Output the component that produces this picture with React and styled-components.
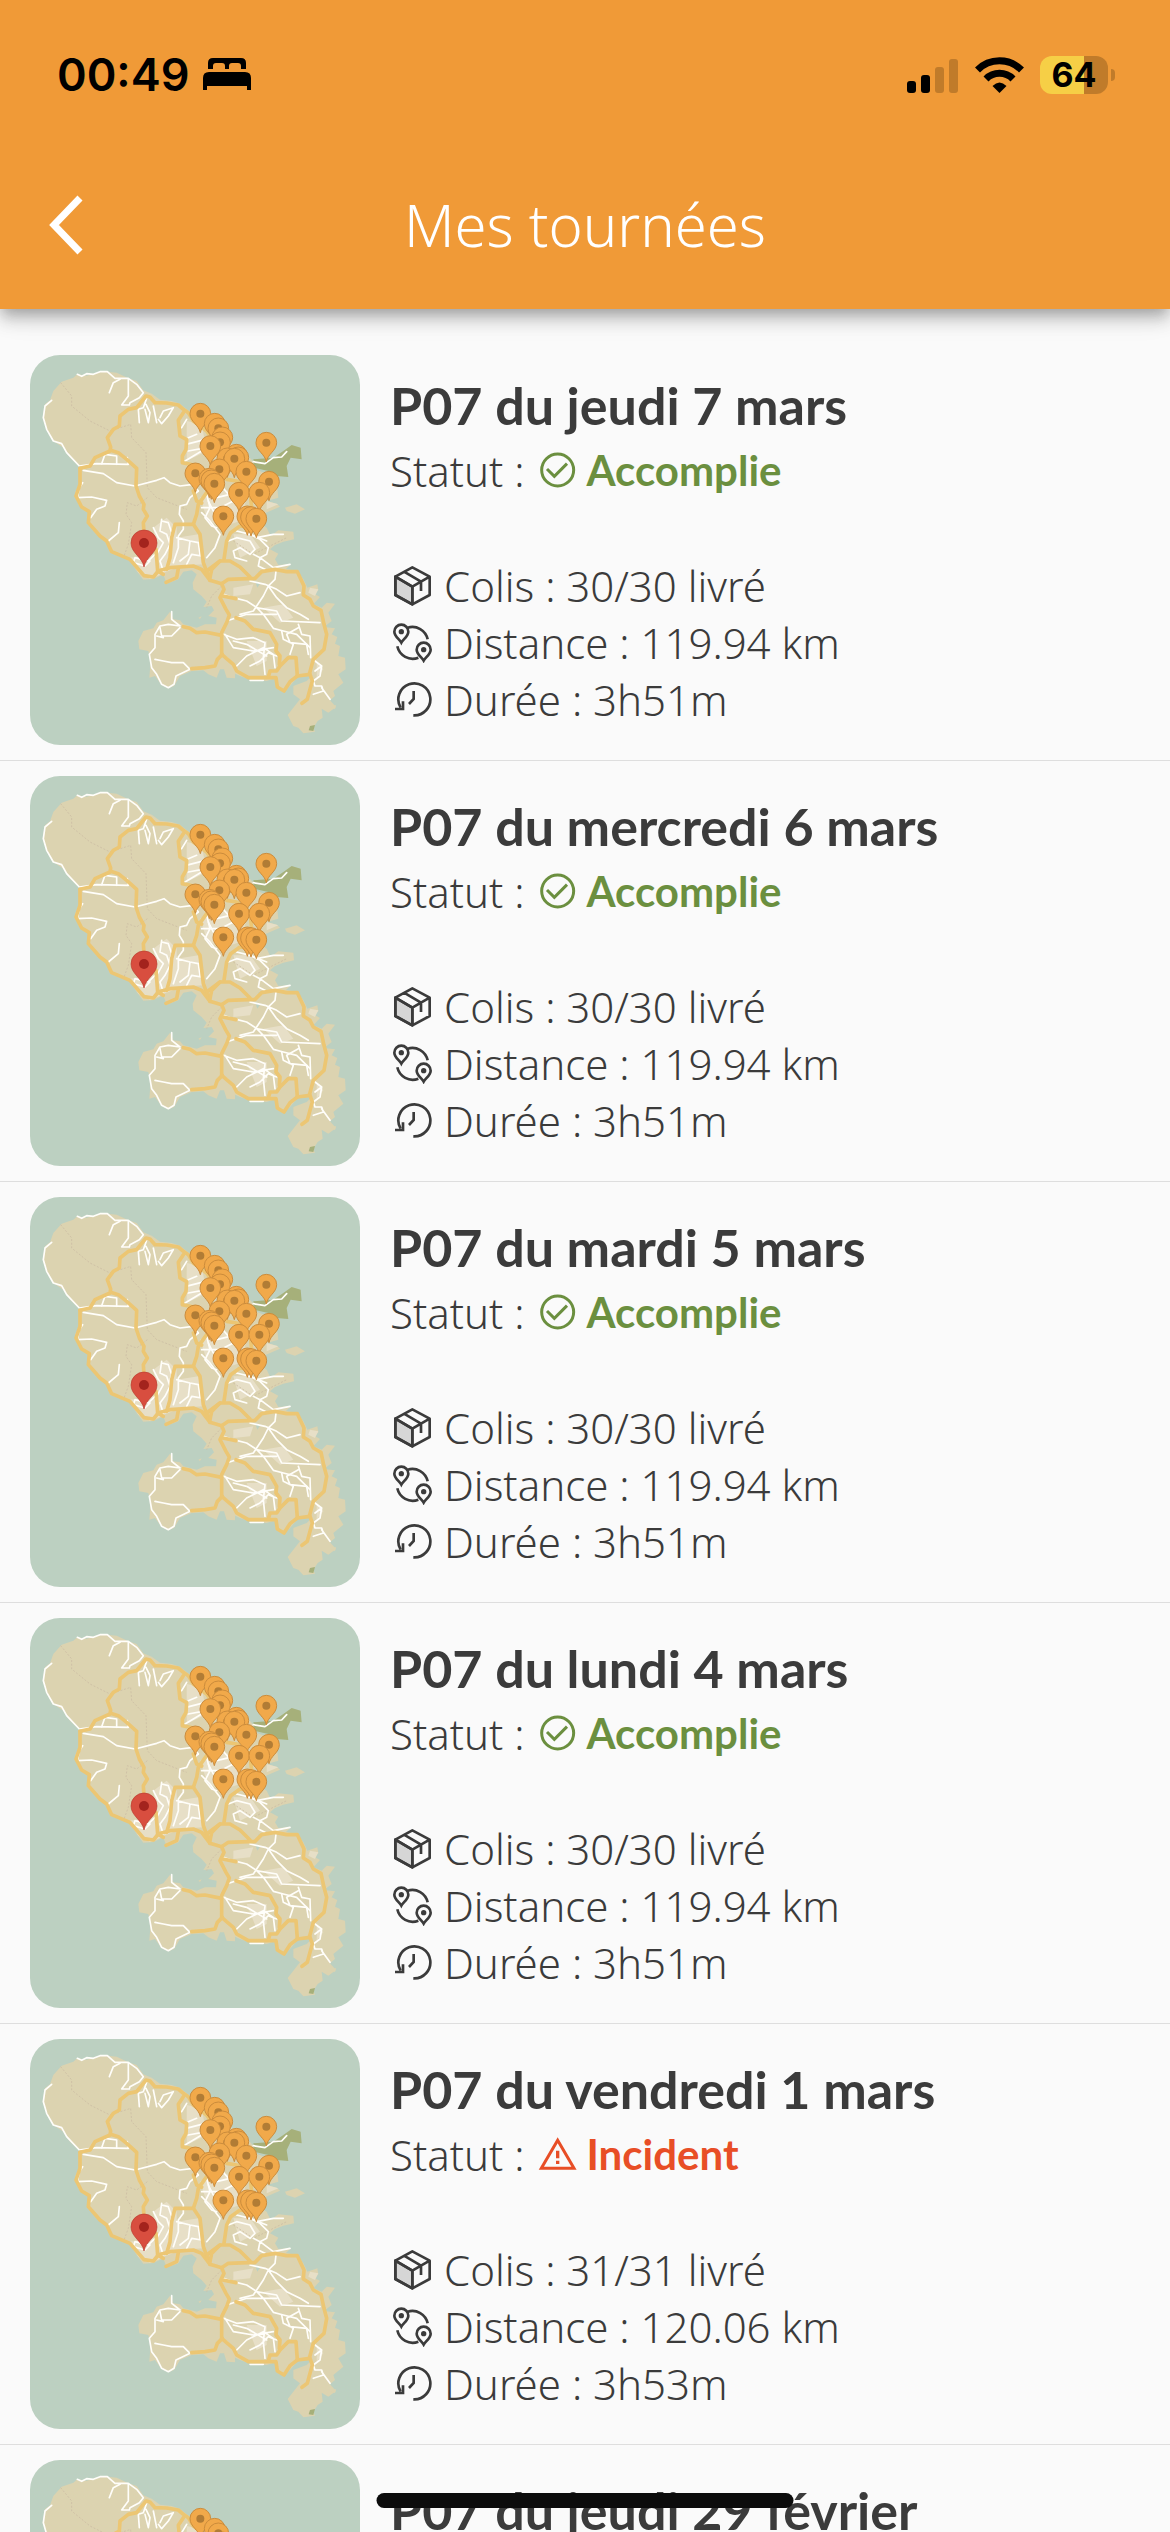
import React from "react";
import styled, { createGlobalStyle } from "styled-components";

const tours = [
  { title: "P07 du jeudi 7 mars", status: "done", parcels: "30/30", distance: "119.94", duration: "3h51m" },
  { title: "P07 du mercredi 6 mars", status: "done", parcels: "30/30", distance: "119.94", duration: "3h51m" },
  { title: "P07 du mardi 5 mars", status: "done", parcels: "30/30", distance: "119.94", duration: "3h51m" },
  { title: "P07 du lundi 4 mars", status: "done", parcels: "30/30", distance: "119.94", duration: "3h51m" },
  { title: "P07 du vendredi 1 mars", status: "incident", parcels: "31/31", distance: "120.06", duration: "3h53m" },
  { title: "P07 du jeudi 29 février", status: "done", parcels: "30/30", distance: "119.94", duration: "3h51m" },
];

const statuses = {
  done: { label: "Accomplie", color: "#6b8f3f" },
  incident: { label: "Incident", color: "#e84e26" },
};

// back to front, so the southern pins overlap the northern ones
const pins = [
  [541, 218], [584, 248], [595, 262], [607, 289], [600, 304], [571, 315],
  [739, 305], [649, 341], [655, 349], [622, 352], [643, 353], [598, 385],
  [679, 392], [526, 397], [747, 422], [568, 413], [574, 418], [583, 428],
  [657, 455], [718, 455], [610, 526], [682, 526], [693, 528], [709, 533],
];

const LAND =
  "M172 100L200 104L235 94L262 92L290 95L325 112L350 120L370 148L395 158L420 176L455 180L480 188L500 205L530 225L555 260L580 290L640 310L680 340L700 362L705 385L745 400L770 425L775 470L740 480L770 488L780 497L745 512L730 520L715 545L740 560L752 585L775 568L820 572L822 595L790 602L765 612L750 625L775 638L765 655L775 672L812 670L798 684L832 690L850 715L862 740L892 730L895 748L880 757L900 768L880 790L905 800L920 785L945 788L925 815L935 840L912 858L945 862L935 880L952 888L945 908L960 915L955 945L975 950L977 985L955 1000L970 1025L940 1050L945 1065L930 1078L948 1098L925 1115L905 1103L908 1130L893 1140L880 1160L885 1172L850 1177L835 1160L820 1155L803 1122L820 1100L840 1075L820 1060L820 1035L860 1020L875 1005L835 1005L810 1035L790 1052L768 1040L765 1012L740 1020L700 1018L680 1012L660 1005L645 998L645 1012L620 1010L612 985L600 985L590 1010L565 1000L550 988L515 990L480 1005L462 1035L445 1042L425 1032L405 1005L388 1010L392 960L385 930L358 925L355 900L370 870L400 862L410 845L430 838L450 812L460 835L480 838L490 850L530 860L555 850L588 850L590 830L565 825L582 808L575 795L550 798L560 782L545 765L520 745L518 725L530 700L515 688L490 692L475 715L440 728L430 700L400 714L370 716L350 690L330 655L300 645L270 635L262 605L230 580L205 548L205 510L175 490L165 455L180 420L180 378L150 350L130 320L100 300L80 265L68 230L75 190L90 178L100 150L125 122L160 110Z";

const YELLOW = [
  "M180 382L210 375L225 350L270 330L272 318L262 290L280 265L298 255L300 225L325 205L350 200L378 165L390 168L405 185L440 186L475 192L490 205L505 215L520 240L560 270L580 300",
  "M490 215L475 238L480 285L500 296L498 325L487 345L487 365L520 372L560 390",
  "M180 382L180 430L168 465L185 498L208 512L205 545L240 585L260 600L275 632L330 655L360 690L372 704L400 708L415 690",
  "M272 328L295 335L320 355L350 382L348 435L358 465L372 490L370 505L382 525L370 545L373 590",
  "M408 625L413 690L450 680L520 675L545 685L570 718L605 728",
  "M413 690L430 700M440 685L450 650L455 590L465 550L520 550L540 580L550 665L570 718",
  "M520 550L530 520L535 490L560 455M520 450L530 480L545 486",
  "M612 655L620 600L632 575L660 555L700 560M620 415L650 420L690 450L695 500",
  "M560 690L600 660L630 660L660 678L690 708",
  "M570 710L575 685L600 660M605 728L625 715L705 712L725 692L765 685L800 692L832 692L852 735L850 762L870 775L880 795L903 808L912 850L920 880L912 925L880 955L868 1000",
  "M605 728L612 745L600 770L618 805L628 822L620 845L605 875L605 940L640 970L650 990L685 1010L768 1010L772 1038L792 1050L810 1022L832 1005L870 1000L877 1020L870 1045L862 1075L846 1087",
  "M832 1005L828 950L805 950L780 975L770 990L750 990L745 1008",
  "M648 830L675 840L700 865L750 875L770 910L768 930L780 945L778 970",
  "M490 857L510 862L530 875L555 873L605 883M515 983L555 980L585 975L592 955L607 940",
  "M608 765L648 773M438 724L470 710L475 682",
];

const WHITE = [
  "M172 100L185 106L200 98L220 100L240 92L262 92L285 112L325 112L350 130L370 155L358 170L330 185L328 192L305 192L325 165L325 115",
  "M95 178L75 195L70 230L80 265L100 300L125 308L140 335L178 375L230 368L325 370L322 350",
  "M190 388L250 398L290 425L345 435L410 418L432 410L450 425L480 435L520 430L535 450",
  "M188 425L178 440L172 470L215 468L260 478L255 495L230 505L212 530M245 368L255 340L290 345L290 370",
  "M380 172L370 200L355 205L358 245M375 205L385 245L390 215L378 190M400 195L410 245M420 230L430 210L460 200L445 225L425 248L415 235",
  "M500 235L485 260M505 290L530 280M498 310L545 298M495 360L545 330M505 330L560 320",
  "M425 535L420 570L440 580L450 610L435 640L420 660L430 690M425 540L445 545L455 575L448 600M400 560L415 590L430 605L410 640M405 640L385 660L345 650L340 665L375 675L390 660",
  "M535 450L510 470L500 490L480 495L478 520L490 540L490 565L475 585L475 620L460 665M470 590L510 600L535 605L540 640M510 600L505 640L480 660M500 670L515 640L545 645M545 500L600 500L640 480M560 460L570 500L555 530L575 555L590 560",
  "M545 515L570 540L600 580L585 620L560 650M590 470L630 460L680 460M600 430L625 460M565 480L580 510L620 520",
  "M625 600L650 590L690 600L705 625L690 640L660 620L640 630L645 650L680 660M650 570L690 580L720 595L745 620L740 640L720 650L715 675L745 690M710 590L760 580L790 580M700 640L720 650L760 680L810 670",
  "M768 690L765 715L745 735L730 765L708 798L700 810L660 820M690 720L735 730L770 745L800 765L840 755M745 735L770 770L800 800L840 820L865 835",
  "M610 760L640 770L680 780L708 798L730 820L760 862L790 870L830 880L870 920M708 800L770 810L785 840L900 845M620 840L680 820L770 820",
  "M610 880L650 895L700 890L735 905L730 950L735 1000M615 880L640 920L700 930L760 920M640 900L680 910L740 945M650 975L680 945L730 920L760 940L765 980M690 975L720 960L745 935L770 945M620 950L640 970",
  "M835 850L845 880L870 885L872 950M785 870L790 895L820 910L810 940M835 860L800 880L810 905L860 910L865 940",
  "M455 812L455 835L480 855L445 850L420 855L405 880L405 920L388 940L395 980L410 1000L425 1030L445 1040L462 1030L468 1005L510 985L490 965L455 965L430 960L405 955",
  "M420 860L425 885L455 885L480 860M410 885L430 890",
  "M700 362L735 368L760 350L785 348L800 332M690 580L740 600",
  "M885 960L905 975L900 1005L880 1020L885 1035L905 1035L910 1050L880 1060M905 975L885 990M905 1040L930 1075M690 1018L730 1018",
  "M265 600L295 575L298 545M268 155L280 125L300 115",
];

const URBAN =
  "M330 650L400 640L425 700L390 714L355 695ZM400 560L440 530L470 560L470 680L420 700ZM470 590L535 580L550 670L470 675ZM540 470L600 440L680 470L660 540L600 560L560 530ZM640 740L700 730L690 760L640 765ZM730 800L790 790L820 830L780 845ZM500 240L545 250L560 330L500 360ZM640 580L690 580L720 620L660 650ZM870 740L895 745L885 765L865 755ZM740 480L775 490L740 505ZM680 900L740 900L740 960L710 975ZM890 960L910 985L890 1010Z";

function TourMap() {
  return (
    <MapFrame viewBox="30 42 990 1170" role="img" aria-label="Carte de la tournée">
      <rect x="30" y="42" width="990" height="1170" fill="#bcd0c1" />
      <path d={LAND} fill="#dcd3b0" />
      <path d="M795 500L830 490L855 505L825 518L800 510ZM535 830L545 826L540 834ZM930 1098L948 1092L945 1104Z" fill="#dcd3b0" />
      <path d={URBAN} fill="#e7dfc7" />
      <path d="M700 355L760 350L790 330L815 312L842 320L845 355L812 350L800 375L805 408L770 405L745 390L700 380ZM870 1155L885 1152L880 1170L866 1168Z" fill="#a6b07a" />
      <path d="M705 720L722 725L712 740ZM715 690L728 695L718 702Z" fill="#bcd0c1" />
      <g fill="none" stroke="#cfc1a6" strokeWidth="3" strokeDasharray="6 5">
        <path d="M122 125L155 165L155 195L210 240L270 270L332 250L335 290L378 335L382 440L410 470L500 505" />
        <path d="M382 470L350 495L322 485L318 520L335 545L325 610L312 645M605 735L575 765L560 800M640 600L700 640L800 590" />
      </g>
      <g fill="none" stroke="#fffefa" strokeWidth="5" strokeLinejoin="round" strokeLinecap="round">
        {WHITE.map((d) => (
          <path key={d} d={d} />
        ))}
      </g>
      <g fill="none" stroke="#ecc673" strokeWidth="11" strokeLinejoin="round" strokeLinecap="round">
        {YELLOW.map((d) => (
          <path key={d} d={d} />
        ))}
      </g>
      {pins.map(([x, y]) => (
        <g key={`${x}-${y}`} transform={`translate(${x} ${y})`}>
          <path d="M0 57C-4 34-31 24-31 0A31 31 0 1 1 31 0C31 24 4 34 0 57Z" fill="#f1a94a" stroke="#cb8c3c" strokeWidth="3" />
          <circle r="12" fill="#b17c35" />
        </g>
      ))}
      <g transform="translate(372 606)">
        <path d="M0 72C-5 42-39 30-39 0A39 39 0 1 1 39 0C39 30 5 42 0 72Z" fill="#d84e3f" stroke="#b93a2e" strokeWidth="2" />
        <circle r="15" fill="#a3231d" />
      </g>
    </MapFrame>
  );
}

function StatusIcon({ status }) {
  if (status === "incident") {
    return (
      <Icon viewBox="499 309 126 126" aria-hidden="true">
        <path d="M564 331L613 415H515Z" strokeWidth="9" />
        <path d="M564 362V385M564 392V402" strokeWidth="10" />
      </Icon>
    );
  }
  return (
    <Icon viewBox="499 291 126 126" aria-hidden="true">
      <circle cx="564" cy="354" r="48" strokeWidth="9" />
      <path d="M532 351L554 373L592 335" strokeWidth="9" />
    </Icon>
  );
}

function BoxIcon() {
  return (
    <Icon viewBox="60 639 126 126" strokeWidth="8" strokeLinejoin="round" aria-hidden="true">
      <path d="M76 677L127 707V760L76 732Z" fill="#d6d6d6" />
      <path d="M127 649L179 677V732L127 760L76 732V677ZM76 677L127 707L179 677M127 707V760M102 662L153 692V720" />
    </Icon>
  );
}

function RouteIcon() {
  return (
    <Icon viewBox="60 810 126 126" strokeWidth="8" aria-hidden="true">
      <path d="M94 875C88 864 73 856 73 842A21 21 0 0 1 115 842C115 856 100 864 94 875Z" />
      <path d="M161 929C155 918 140 910 140 896A21 21 0 0 1 182 896C182 910 167 918 161 929Z" />
      <circle cx="94" cy="842" r="8" fill="#3b3b3b" stroke="none" />
      <circle cx="161" cy="896" r="8" fill="#3b3b3b" stroke="none" />
      <path d="M113 830A47 47 0 0 1 173 865M82 886A47 47 0 0 0 145 920" />
    </Icon>
  );
}

function ClockIcon() {
  return (
    <Icon viewBox="60 983 126 126" strokeWidth="8" aria-hidden="true">
      <path d="M130 1095A48 48 0 1 0 92 1072" />
      <path d="M75 1076H99V1053M131 1022V1046L117 1061" />
    </Icon>
  );
}

function StatusBar() {
  return (
    <StatusBarRow>
      <Clock>
        00:49
        <svg width="48" height="33" viewBox="0 0 48 33" aria-hidden="true">
          <path d="M5 11V5Q5 0 10 0H38Q43 0 43 5V11H38V8Q38 5 35 5H29Q26 5 26 8V11H22V8Q22 5 19 5H13Q10 5 10 8V11Z" />
          <path d="M0 32V20Q0 14 6 14H42Q48 14 48 20V32H44V28H4V32Z" />
        </svg>
      </Clock>
      <Indicators>
        <svg width="52" height="36" viewBox="0 0 52 36" aria-hidden="true">
          <rect x="0" y="24" width="9" height="12" rx="3" />
          <rect x="14" y="18" width="9" height="18" rx="3" />
          <rect x="28" y="10" width="9" height="26" rx="3" fill="#c07b2a" />
          <rect x="42" y="2" width="9" height="34" rx="3" fill="#c07b2a" />
        </svg>
        <svg width="49" height="36" viewBox="0 0 49 36" aria-hidden="true">
          <g fill="none" stroke="#000" strokeWidth="7">
            <path d="M2.500 13A31 31 0 0 1 46.500 13" />
            <path d="M11 22A19 19 0 0 1 38 22" />
          </g>
          <path d="M17.500 29Q24.500 22 31.500 29L24.500 36Z" />
        </svg>
        <Battery>
          <BatteryBody>64</BatteryBody>
          <BatteryCap />
        </Battery>
      </Indicators>
    </StatusBarRow>
  );
}

function Tour({ tour }) {
  const status = statuses[tour.status];
  return (
    <TourRow>
      <TourMap />
      <Details>
        <TourTitle>{tour.title}</TourTitle>
        <Line>
          Statut :
          <Status $color={status.color}>
            <StatusIcon status={tour.status} />
            {status.label}
          </Status>
        </Line>
        <Stats>
          <Line>
            <BoxIcon />
            Colis : {tour.parcels} livré
          </Line>
          <Line>
            <RouteIcon />
            Distance : {tour.distance} km
          </Line>
          <Line>
            <ClockIcon />
            Durée : {tour.duration}
          </Line>
        </Stats>
      </Details>
    </TourRow>
  );
}

export default function App() {
  return (
    <Screen>
      <GlobalStyle />
      <Header>
        <StatusBar />
        <Toolbar>
          <BackButton type="button" aria-label="Retour">
            <svg width="36" height="60" viewBox="0 0 36 60" fill="none" stroke="currentColor" strokeWidth="7" aria-hidden="true">
              <path d="M32 3L6 30L32 57" />
            </svg>
          </BackButton>
          <PageTitle>Mes tournées</PageTitle>
        </Toolbar>
      </Header>
      <TourList>
        {tours.map((tour) => (
          <Tour key={tour.title} tour={tour} />
        ))}
      </TourList>
      <HomeIndicator />
    </Screen>
  );
}

const GlobalStyle = createGlobalStyle`
  * {
    box-sizing: border-box;
  }

  body {
    margin: 0;
    background: #fafafa;
    color: #3b3b3b;
    font-family: "Noto Sans", sans-serif;
    font-weight: 300;
  }
`;

const Screen = styled.div`
  display: flex;
  flex-direction: column;
  height: 100vh;
`;

const Header = styled.header`
  position: relative;
  z-index: 1;
  flex: none;
  background: #f09a37;
  box-shadow:
    0 6px 12px -3px rgba(0, 0, 0, 0.2),
    0 12px 15px 0 rgba(0, 0, 0, 0.14),
    0 3px 30px 0 rgba(0, 0, 0, 0.12);
`;

const StatusBarRow = styled.div`
  display: flex;
  align-items: center;
  justify-content: space-between;
  height: 141px;
  padding: 8px 55px 0 57px;
  color: #000;
`;

const Clock = styled.div`
  display: flex;
  align-items: center;
  gap: 14px;
  font-family: Inter, sans-serif;
  font-size: 45px;
  font-weight: 600;
`;

const Indicators = styled.div`
  display: flex;
  align-items: center;
  gap: 16px;
`;

const Battery = styled.div`
  display: flex;
  align-items: center;
  gap: 3px;
`;

const BatteryBody = styled.div`
  width: 68px;
  border-radius: 12px;
  background: linear-gradient(to right, #f6cf46 64%, #c07b2a 64%);
  font-family: Inter, sans-serif;
  font-size: 34px;
  font-weight: 700;
  line-height: 38px;
  text-align: center;
`;

const BatteryCap = styled.div`
  width: 4px;
  height: 12px;
  border-radius: 0 4px 4px 0;
  background: #c07b2a;
`;

const Toolbar = styled.div`
  display: grid;
  grid-template-columns: 120px 1fr 120px;
  align-items: center;
  height: 168px;
  color: #fff;
`;

const BackButton = styled.button`
  display: flex;
  padding: 24px 36px 24px 48px;
  border: none;
  background: transparent;
  color: inherit;
  cursor: pointer;
`;

const PageTitle = styled.h1`
  margin: 0;
  font-size: 58px;
  font-weight: 300;
  line-height: 80px;
  text-align: center;
`;

const TourList = styled.ul`
  flex: 1;
  min-height: 0;
  margin: 0;
  padding: 31px 0 0;
  overflow-y: auto;
  scrollbar-width: none;
  list-style: none;
`;

const TourRow = styled.li`
  display: flex;
  align-items: center;
  gap: 30px;
  padding: 15px 30px;
  border-bottom: 1px solid #dedede;
`;

const MapFrame = styled.svg`
  flex: none;
  width: 330px;
  height: 390px;
  border-radius: 30px;
`;

const Details = styled.div`
  flex: 1;
  min-width: 0;
  padding-bottom: 4px;
  font-size: 42px;
  line-height: 57px;
`;

const TourTitle = styled.h2`
  margin: 0;
  font-family: Lato, sans-serif;
  font-size: 52px;
  font-weight: 700;
  line-height: 73px;
`;

const Line = styled.div`
  display: flex;
  align-items: center;
  gap: 12px;
`;

const Status = styled.span`
  display: flex;
  align-items: center;
  gap: 8px;
  color: ${({ $color }) => $color};
  font-family: Lato, sans-serif;
  font-weight: 700;
`;

const Stats = styled.div`
  margin-top: 58px;
`;

const Icon = styled.svg`
  flex: none;
  width: 42px;
  height: 42px;
  fill: none;
  stroke: currentColor;
`;

const HomeIndicator = styled.div`
  position: fixed;
  bottom: 24px;
  left: 50%;
  z-index: 2;
  width: 417px;
  height: 15px;
  border-radius: 8px;
  background: #0c0c0c;
  transform: translateX(-50%);
`;
